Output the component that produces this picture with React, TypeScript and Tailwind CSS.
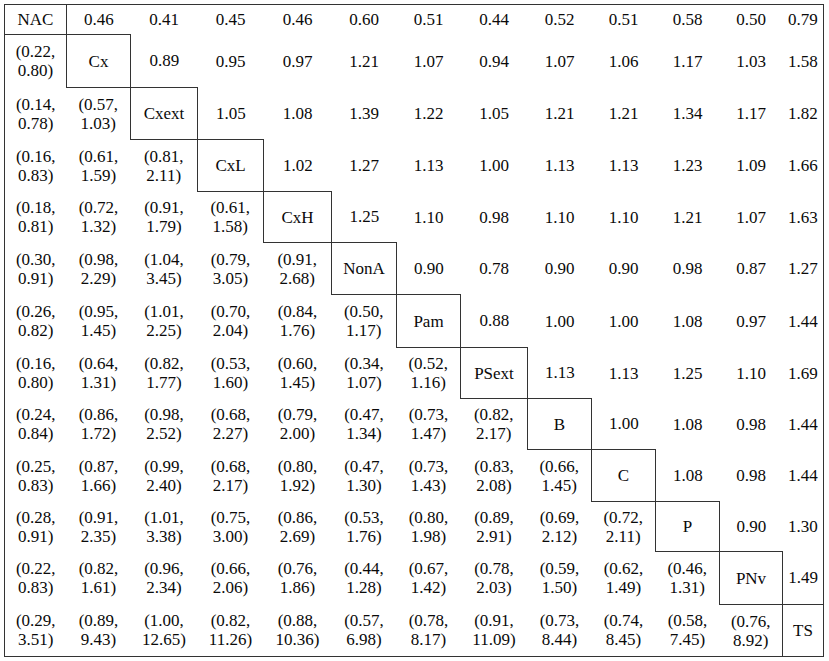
const labels = ["NAC", "Cx", "Cxext", "CxL", "CxH", "NonA", "Pam", "PSext", "B", "C", "P", "PNv", "TS"];

// upper triangle: ratios, row by row (cells right of the diagonal)
const upper: string[][] = [
  ["0.46", "0.41", "0.45", "0.46", "0.60", "0.51", "0.44", "0.52", "0.51", "0.58", "0.50", "0.79"],
  ["0.89", "0.95", "0.97", "1.21", "1.07", "0.94", "1.07", "1.06", "1.17", "1.03", "1.58"],
  ["1.05", "1.08", "1.39", "1.22", "1.05", "1.21", "1.21", "1.34", "1.17", "1.82"],
  ["1.02", "1.27", "1.13", "1.00", "1.13", "1.13", "1.23", "1.09", "1.66"],
  ["1.25", "1.10", "0.98", "1.10", "1.10", "1.21", "1.07", "1.63"],
  ["0.90", "0.78", "0.90", "0.90", "0.98", "0.87", "1.27"],
  ["0.88", "1.00", "1.00", "1.08", "0.97", "1.44"],
  ["1.13", "1.13", "1.25", "1.10", "1.69"],
  ["1.00", "1.08", "0.98", "1.44"],
  ["1.08", "0.98", "1.44"],
  ["0.90", "1.30"],
  ["1.49"],
  [],
];

// lower triangle: intervals (cells left of the diagonal)
const lower: [string, string][][] = [
  [],
  [["0.22", "0.80"]],
  [["0.14", "0.78"], ["0.57", "1.03"]],
  [["0.16", "0.83"], ["0.61", "1.59"], ["0.81", "2.11"]],
  [["0.18", "0.81"], ["0.72", "1.32"], ["0.91", "1.79"], ["0.61", "1.58"]],
  [["0.30", "0.91"], ["0.98", "2.29"], ["1.04", "3.45"], ["0.79", "3.05"], ["0.91", "2.68"]],
  [["0.26", "0.82"], ["0.95", "1.45"], ["1.01", "2.25"], ["0.70", "2.04"], ["0.84", "1.76"], ["0.50", "1.17"]],
  [["0.16", "0.80"], ["0.64", "1.31"], ["0.82", "1.77"], ["0.53", "1.60"], ["0.60", "1.45"], ["0.34", "1.07"], ["0.52", "1.16"]],
  [["0.24", "0.84"], ["0.86", "1.72"], ["0.98", "2.52"], ["0.68", "2.27"], ["0.79", "2.00"], ["0.47", "1.34"], ["0.73", "1.47"], ["0.82", "2.17"]],
  [["0.25", "0.83"], ["0.87", "1.66"], ["0.99", "2.40"], ["0.68", "2.17"], ["0.80", "1.92"], ["0.47", "1.30"], ["0.73", "1.43"], ["0.83", "2.08"], ["0.66", "1.45"]],
  [["0.28", "0.91"], ["0.91", "2.35"], ["1.01", "3.38"], ["0.75", "3.00"], ["0.86", "2.69"], ["0.53", "1.76"], ["0.80", "1.98"], ["0.89", "2.91"], ["0.69", "2.12"], ["0.72", "2.11"]],
  [["0.22", "0.83"], ["0.82", "1.61"], ["0.96", "2.34"], ["0.66", "2.06"], ["0.76", "1.86"], ["0.44", "1.28"], ["0.67", "1.42"], ["0.78", "2.03"], ["0.59", "1.50"], ["0.62", "1.49"], ["0.46", "1.31"]],
  [["0.29", "3.51"], ["0.89", "9.43"], ["1.00", "12.65"], ["0.82", "11.26"], ["0.88", "10.36"], ["0.57", "6.98"], ["0.78", "8.17"], ["0.91", "11.09"], ["0.73", "8.44"], ["0.74", "8.45"], ["0.58", "7.45"], ["0.76", "8.92"]],
];

const colWidths = ["w-[62px]", "w-[64px]", "w-[67px]", "w-[66px]", "w-[68px]", "w-[65px]", "w-[64px]", "w-[67px]", "w-[64px]", "w-[64px]", "w-[64px]", "w-[63px]", "w-[41px]"];
const rowHeights = ["h-[30px]", "h-[53px]", "h-[52px]", "h-[52px]", "h-[51px]", "h-[52px]", "h-[53px]", "h-[51px]", "h-[51px]", "h-[52px]", "h-[50px]", "h-[53px]", "h-[52px]"];

export default function App() {
  return (
    <div className="w-[829px] h-[661px] bg-white pl-[4px] pt-[4px] font-['Liberation_Serif',serif] text-[17px] leading-[19px] text-[#0a0a0a]">
      <table className="table-fixed border-collapse border border-[#333] w-[820px]">
        <colgroup>
          {colWidths.map((w, i) => (
            <col key={i} className={w} />
          ))}
        </colgroup>
        <tbody>
          {labels.map((label, r) => (
            <tr key={label} className={rowHeights[r]}>
              {lower[r].map(([a, b], c) => (
                <td key={"l" + c} className="p-0 text-center align-middle">
                  ({a},
                  <br />
                  {b})
                </td>
              ))}
              <td className="p-0 text-center align-middle border border-[#333]">{label}</td>
              {upper[r].map((v, c) => (
                <td key={"u" + c} className="p-0 text-center align-middle">
                  {v}
                </td>
              ))}
            </tr>
          ))}
        </tbody>
      </table>
    </div>
  );
}
